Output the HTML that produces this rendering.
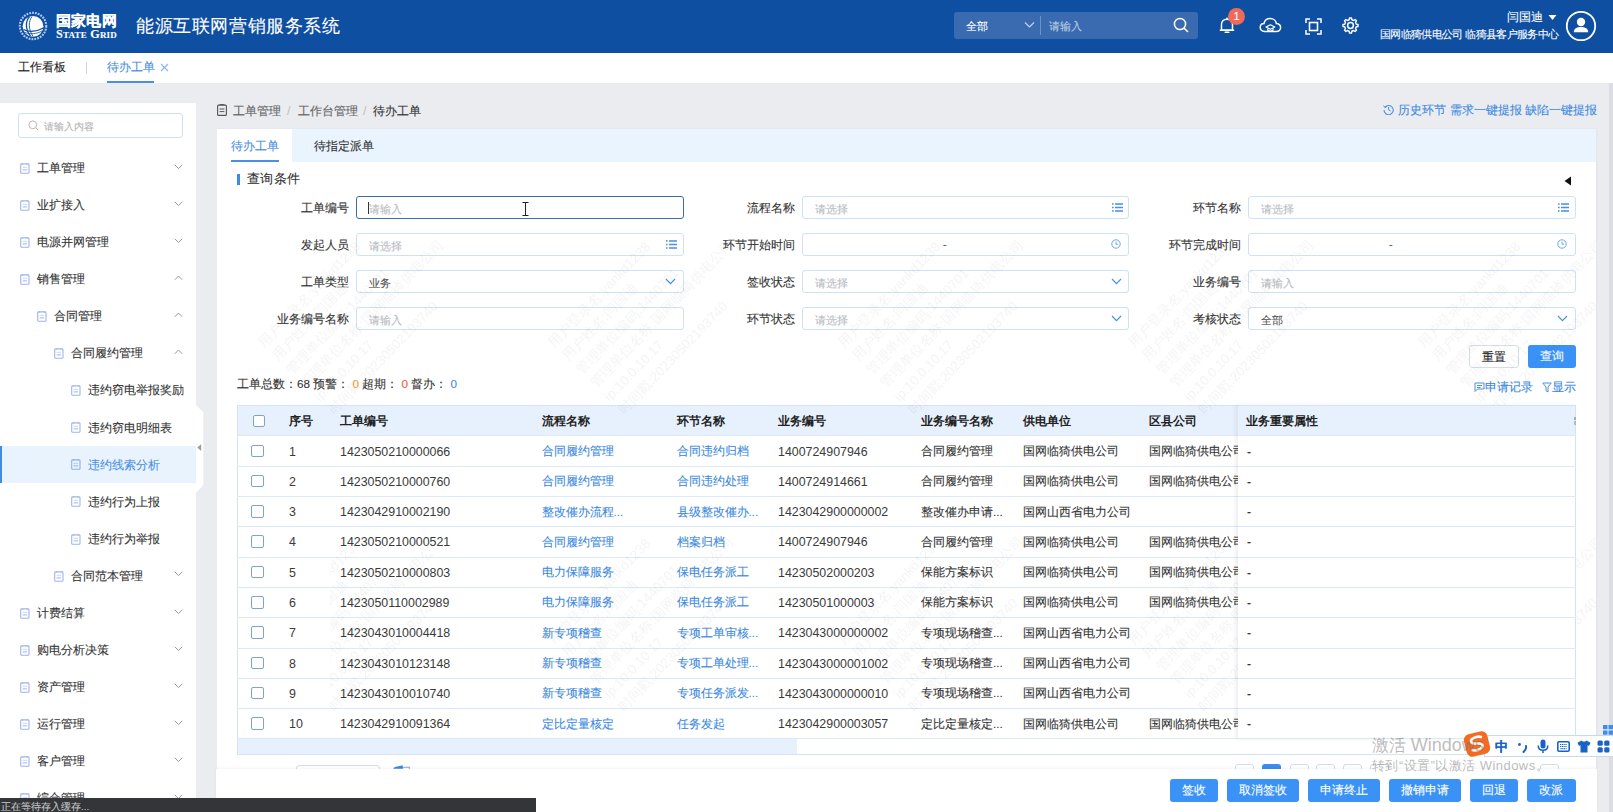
<!DOCTYPE html>
<html><head><meta charset="utf-8">
<style>
*{box-sizing:border-box;margin:0;padding:0}
html,body{width:1613px;height:812px;overflow:hidden}
body{position:relative;background:#eaecf0;font-family:"Liberation Sans",sans-serif;font-size:12px;color:#333}
.a{position:absolute;white-space:nowrap;-webkit-text-stroke-width:0.1px}
.n{-webkit-text-stroke-width:0}
#hdr{left:0;top:0;width:1613px;height:53px;background:#0f4fa2}
#tabs{left:0;top:53px;width:1613px;height:30px;background:#fff}
#side{left:0;top:103px;width:196px;height:709px;background:#fff}
#vscroll{left:1609px;top:83px;width:4px;height:729px;background:#dcdde2}
#panel{left:217px;top:129px;width:1380px;height:640px;background:#fff}
#bottombar{left:216px;top:769px;width:1381px;height:43px;background:#fff}
#status{left:0;top:797px;width:536px;height:15px;background:#333538}
</style></head><body>
<div id="hdr" class="a">
<svg class="a" style="left:17px;top:10px" width="32" height="32" viewBox="0 0 32 32">
<circle cx="16" cy="16" r="13.2" fill="none" stroke="#b5cdef" stroke-width="2.1" stroke-dasharray="1.8 1.1"/>
<circle cx="16" cy="16.3" r="10.4" fill="#fff"/>
<path d="M12.5 6.8 C8.5 11 8 19 13.5 26.2" fill="none" stroke="#0f4fa2" stroke-width="1.3"/>
<path d="M15 6.6 C11.5 11 11 19 16 26.4" fill="none" stroke="#0f4fa2" stroke-width="0.9"/>
<path d="M6.5 19.5 C12 22.5 20 21.5 26.3 18" fill="none" stroke="#0f4fa2" stroke-width="1.2"/>
<path d="M8 22.5 C13 24.5 20 24 25 21" fill="none" stroke="#0f4fa2" stroke-width="0.8"/>
</svg>
<div class="a" style="left:55.5px;top:10.5px;font-size:15px;line-height:20px;color:#fff;font-weight:bold;letter-spacing:0.45px">国家电网</div>
<div class="a" style="left:56px;top:28px;font-family:'Liberation Serif',serif;font-weight:bold;font-size:12.2px;line-height:12px;color:#fff;font-variant:small-caps;letter-spacing:0.2px">State Grid</div>
<div class="a" style="left:136px;top:13px;font-size:18px;line-height:26px;color:#fff;letter-spacing:0.6px">能源互联网营销服务系统</div>

<div class="a" style="left:954px;top:12px;width:244px;height:27px;background:#3a6bb0;border-radius:3px"></div>
<div class="a" style="left:966px;top:19px;font-size:11px;line-height:15px;color:#fff">全部</div>
<svg class="a" style="left:1024px;top:21px" width="11" height="8" viewBox="0 0 11 8"><path d="M1 1.5 L5.5 6 L10 1.5" fill="none" stroke="#c8d6ea" stroke-width="1.1"/></svg>
<div class="a" style="left:1040px;top:16px;width:1px;height:19px;background:#6d92c6"></div>
<div class="a" style="left:1049px;top:19px;font-size:11px;line-height:15px;color:#b9cbe4">请输入</div>
<svg class="a" style="left:1173px;top:17px" width="16" height="16" viewBox="0 0 16 16"><circle cx="7" cy="7" r="5.6" fill="none" stroke="#fff" stroke-width="1.5"/><path d="M11.2 11.2 L14.5 14.5" stroke="#fff" stroke-width="1.6" stroke-linecap="round"/></svg>
<svg class="a" style="left:1218px;top:16px" width="18" height="19" viewBox="0 0 18 19"><path d="M3.5 14 V8.5 C3.5 5.3 5.8 3.2 9 3.2 C12.2 3.2 14.5 5.3 14.5 8.5 V14 Z M1.8 14.2 H16.2" fill="none" stroke="#fff" stroke-width="1.5" stroke-linejoin="round"/><path d="M7.2 16.2 H10.8" stroke="#fff" stroke-width="1.6" stroke-linecap="round"/><path d="M9 1.5 V3" stroke="#fff" stroke-width="1.4"/></svg>
<div class="a" style="left:1228px;top:8px;width:17px;height:17px;border-radius:50%;background:#ef6a5a;color:#fff;font-size:11px;line-height:17px;text-align:center">1</div>
<svg class="a" style="left:1259px;top:17px" width="23" height="17" viewBox="0 0 23 17"><path d="M5.5 14.5 C2.8 14.5 1.2 12.6 1.2 10.4 C1.2 8.2 2.9 6.6 5 6.5 C5.5 3.6 8 1.5 11.2 1.5 C14.5 1.5 17 3.8 17.4 6.6 C19.8 6.8 21.6 8.4 21.6 10.6 C21.6 12.8 19.8 14.5 17.5 14.5 Z" fill="none" stroke="#fff" stroke-width="1.5"/><path d="M7 10 L11.4 7.8 L15.8 10 L11.4 12.2 Z M8.8 11 V13.2 C10.4 14.2 12.4 14.2 14 13.2 V11" fill="none" stroke="#fff" stroke-width="1.2" stroke-linejoin="round"/></svg>
<svg class="a" style="left:1305px;top:18px" width="17" height="17" viewBox="0 0 17 17"><path d="M1 5 V1 H5 M12 1 H16 V5 M16 12 V16 H12 M5 16 H1 V12" fill="none" stroke="#fff" stroke-width="1.5"/><rect x="4.5" y="4.5" width="8" height="8" fill="none" stroke="#fff" stroke-width="1.6"/></svg>
<svg class="a" style="left:1342px;top:17px" width="17" height="17" viewBox="0 0 17 17"><path d="M14.26 7.21 L16.04 7.51 L16.04 9.49 L14.26 9.79 L13.48 11.66 L14.53 13.13 L13.13 14.53 L11.66 13.48 L9.79 14.26 L9.49 16.04 L7.51 16.04 L7.21 14.26 L5.34 13.48 L3.87 14.53 L2.47 13.13 L3.52 11.66 L2.74 9.79 L0.96 9.49 L0.96 7.51 L2.74 7.21 L3.52 5.34 L2.47 3.87 L3.87 2.47 L5.34 3.52 L7.21 2.74 L7.51 0.96 L9.49 0.96 L9.79 2.74 L11.66 3.52 L13.13 2.47 L14.53 3.87 L13.48 5.34 Z" fill="none" stroke="#fff" stroke-width="1.4" stroke-linejoin="round"/><circle cx="8.5" cy="8.5" r="2.9" fill="none" stroke="#fff" stroke-width="1.5"/></svg>
<div class="a" style="left:1507px;top:10px;font-size:11.5px;line-height:15px;color:#fff">闫国迪</div>
<svg class="a" style="left:1548px;top:14px" width="9" height="7" viewBox="0 0 9 7"><path d="M0.5 1 H8.5 L4.5 6 Z" fill="#fff"/></svg>
<div class="a" style="left:1380px;top:27px;font-size:11px;line-height:14px;color:#fff;letter-spacing:-0.65px">国网临猗供电公司&nbsp;临猗县客户服务中心</div>
<svg class="a" style="left:1565px;top:10px" width="32" height="32" viewBox="0 0 32 32"><circle cx="16" cy="16" r="14.2" fill="none" stroke="#fff" stroke-width="1.8"/><circle cx="16" cy="12" r="4.2" fill="#fff"/><path d="M8.8 22.2 C8.8 18.6 11.8 17 16 17 C20.2 17 23.2 18.6 23.2 22.2 Z" fill="#fff"/></svg>
</div>

<div id="tabs" class="a">
<div class="a" style="left:18px;top:6px;font-size:12px;line-height:16px;color:#222">工作看板</div>
<div class="a" style="left:86px;top:9px;width:1px;height:12px;background:#d6d6d6"></div>
<div class="a" style="left:107px;top:6px;font-size:12px;line-height:16px;color:#4a90e2">待办工单</div>
<svg class="a" style="left:160px;top:10px" width="9" height="9" viewBox="0 0 9 9"><path d="M1 1 L8 8 M8 1 L1 8" stroke="#8ab4e8" stroke-width="1.1"/></svg>
<div class="a" style="left:107px;top:28px;width:47px;height:2px;background:#4a90e2"></div>
</div>

<div id="side" class="a">
<div class="a" style="left:18px;top:10px;width:165px;height:25px;background:#fff;border:1px solid #cfe0f3;border-radius:3px"></div>
<svg class="a" style="left:28px;top:17px" width="11" height="11" viewBox="0 0 11 11"><circle cx="4.8" cy="4.8" r="3.9" fill="none" stroke="#b8b8b8" stroke-width="1"/><path d="M7.6 7.6 L10 10" stroke="#b8b8b8" stroke-width="1"/></svg>
<div class="a" style="left:44px;top:16.5px;font-size:10px;line-height:14px;color:#b4b4b4;">请输入内容</div>
<svg class="a" style="left:20px;top:59.7px" width="10" height="11" viewBox="0 0 10 11"><rect x="0.7" y="0.9" width="8.3" height="9.4" rx="0.9" fill="none" stroke="#9fb5ea" stroke-width="1.1"/><path d="M2.6 0.4 V1.6 M7.1 0.4 V1.6" stroke="#9fb5ea" stroke-width="1"/><path d="M2.6 4.3 H7.1" stroke="#9fb5ea" stroke-opacity="0.55" stroke-width="1"/><path d="M2.6 6.9 H7.1" stroke="#9fb5ea" stroke-width="1"/></svg>
<div class="a" style="left:37px;top:57.0px;font-size:11.7px;line-height:16px;color:#333;">工单管理</div>
<svg class="a" style="left:174px;top:60.6px" width="9" height="6" viewBox="0 0 9 6"><path d="M0.8 0.8 L4.5 4.6 L8.2 0.8" fill="none" stroke="#9a9a9a" stroke-width="1"/></svg>
<svg class="a" style="left:20px;top:96.78px" width="10" height="11" viewBox="0 0 10 11"><rect x="0.7" y="0.9" width="8.3" height="9.4" rx="0.9" fill="none" stroke="#9fb5ea" stroke-width="1.1"/><path d="M2.6 0.4 V1.6 M7.1 0.4 V1.6" stroke="#9fb5ea" stroke-width="1"/><path d="M2.6 4.3 H7.1" stroke="#9fb5ea" stroke-opacity="0.55" stroke-width="1"/><path d="M2.6 6.9 H7.1" stroke="#9fb5ea" stroke-width="1"/></svg>
<div class="a" style="left:37px;top:94.08px;font-size:11.7px;line-height:16px;color:#333;">业扩接入</div>
<svg class="a" style="left:174px;top:97.68px" width="9" height="6" viewBox="0 0 9 6"><path d="M0.8 0.8 L4.5 4.6 L8.2 0.8" fill="none" stroke="#9a9a9a" stroke-width="1"/></svg>
<svg class="a" style="left:20px;top:133.86px" width="10" height="11" viewBox="0 0 10 11"><rect x="0.7" y="0.9" width="8.3" height="9.4" rx="0.9" fill="none" stroke="#9fb5ea" stroke-width="1.1"/><path d="M2.6 0.4 V1.6 M7.1 0.4 V1.6" stroke="#9fb5ea" stroke-width="1"/><path d="M2.6 4.3 H7.1" stroke="#9fb5ea" stroke-opacity="0.55" stroke-width="1"/><path d="M2.6 6.9 H7.1" stroke="#9fb5ea" stroke-width="1"/></svg>
<div class="a" style="left:37px;top:131.16px;font-size:11.7px;line-height:16px;color:#333;">电源并网管理</div>
<svg class="a" style="left:174px;top:134.76px" width="9" height="6" viewBox="0 0 9 6"><path d="M0.8 0.8 L4.5 4.6 L8.2 0.8" fill="none" stroke="#9a9a9a" stroke-width="1"/></svg>
<svg class="a" style="left:20px;top:170.94px" width="10" height="11" viewBox="0 0 10 11"><rect x="0.7" y="0.9" width="8.3" height="9.4" rx="0.9" fill="none" stroke="#9fb5ea" stroke-width="1.1"/><path d="M2.6 0.4 V1.6 M7.1 0.4 V1.6" stroke="#9fb5ea" stroke-width="1"/><path d="M2.6 4.3 H7.1" stroke="#9fb5ea" stroke-opacity="0.55" stroke-width="1"/><path d="M2.6 6.9 H7.1" stroke="#9fb5ea" stroke-width="1"/></svg>
<div class="a" style="left:37px;top:168.24px;font-size:11.7px;line-height:16px;color:#333;">销售管理</div>
<svg class="a" style="left:174px;top:171.84px" width="9" height="6" viewBox="0 0 9 6"><path d="M0.8 4.8 L4.5 1 L8.2 4.8" fill="none" stroke="#9a9a9a" stroke-width="1"/></svg>
<svg class="a" style="left:37px;top:208.02px" width="10" height="11" viewBox="0 0 10 11"><rect x="0.7" y="0.9" width="8.3" height="9.4" rx="0.9" fill="none" stroke="#9fb5ea" stroke-width="1.1"/><path d="M2.6 0.4 V1.6 M7.1 0.4 V1.6" stroke="#9fb5ea" stroke-width="1"/><path d="M2.6 4.3 H7.1" stroke="#9fb5ea" stroke-opacity="0.55" stroke-width="1"/><path d="M2.6 6.9 H7.1" stroke="#9fb5ea" stroke-width="1"/></svg>
<div class="a" style="left:54px;top:205.32px;font-size:11.7px;line-height:16px;color:#333;">合同管理</div>
<svg class="a" style="left:174px;top:208.92px" width="9" height="6" viewBox="0 0 9 6"><path d="M0.8 4.8 L4.5 1 L8.2 4.8" fill="none" stroke="#9a9a9a" stroke-width="1"/></svg>
<svg class="a" style="left:54px;top:245.1px" width="10" height="11" viewBox="0 0 10 11"><rect x="0.7" y="0.9" width="8.3" height="9.4" rx="0.9" fill="none" stroke="#9fb5ea" stroke-width="1.1"/><path d="M2.6 0.4 V1.6 M7.1 0.4 V1.6" stroke="#9fb5ea" stroke-width="1"/><path d="M2.6 4.3 H7.1" stroke="#9fb5ea" stroke-opacity="0.55" stroke-width="1"/><path d="M2.6 6.9 H7.1" stroke="#9fb5ea" stroke-width="1"/></svg>
<div class="a" style="left:71px;top:242.4px;font-size:11.7px;line-height:16px;color:#333;">合同履约管理</div>
<svg class="a" style="left:174px;top:246.0px" width="9" height="6" viewBox="0 0 9 6"><path d="M0.8 4.8 L4.5 1 L8.2 4.8" fill="none" stroke="#9a9a9a" stroke-width="1"/></svg>
<svg class="a" style="left:71px;top:282.18px" width="10" height="11" viewBox="0 0 10 11"><rect x="0.7" y="0.9" width="8.3" height="9.4" rx="0.9" fill="none" stroke="#9fb5ea" stroke-width="1.1"/><path d="M2.6 0.4 V1.6 M7.1 0.4 V1.6" stroke="#9fb5ea" stroke-width="1"/><path d="M2.6 4.3 H7.1" stroke="#9fb5ea" stroke-opacity="0.55" stroke-width="1"/><path d="M2.6 6.9 H7.1" stroke="#9fb5ea" stroke-width="1"/></svg>
<div class="a" style="left:88px;top:279.48px;font-size:11.7px;line-height:16px;color:#333;">违约窃电举报奖励</div>
<svg class="a" style="left:71px;top:319.26px" width="10" height="11" viewBox="0 0 10 11"><rect x="0.7" y="0.9" width="8.3" height="9.4" rx="0.9" fill="none" stroke="#9fb5ea" stroke-width="1.1"/><path d="M2.6 0.4 V1.6 M7.1 0.4 V1.6" stroke="#9fb5ea" stroke-width="1"/><path d="M2.6 4.3 H7.1" stroke="#9fb5ea" stroke-opacity="0.55" stroke-width="1"/><path d="M2.6 6.9 H7.1" stroke="#9fb5ea" stroke-width="1"/></svg>
<div class="a" style="left:88px;top:316.56px;font-size:11.7px;line-height:16px;color:#333;">违约窃电明细表</div>
<div class="a" style="left:0px;top:342.64px;width:196px;height:37px;background:#e8f3fe;"></div>
<div class="a" style="left:0px;top:342.64px;width:2px;height:37px;background:#3f8ce8;"></div>
<svg class="a" style="left:71px;top:356.34px" width="10" height="11" viewBox="0 0 10 11"><rect x="0.7" y="0.9" width="8.3" height="9.4" rx="0.9" fill="none" stroke="#8fb0e6" stroke-width="1.1"/><path d="M2.6 0.4 V1.6 M7.1 0.4 V1.6" stroke="#8fb0e6" stroke-width="1"/><path d="M2.6 4.3 H7.1" stroke="#8fb0e6" stroke-opacity="0.55" stroke-width="1"/><path d="M2.6 6.9 H7.1" stroke="#8fb0e6" stroke-width="1"/></svg>
<div class="a" style="left:88px;top:353.64px;font-size:11.7px;line-height:16px;color:#4a90e2;">违约线索分析</div>
<svg class="a" style="left:71px;top:393.42px" width="10" height="11" viewBox="0 0 10 11"><rect x="0.7" y="0.9" width="8.3" height="9.4" rx="0.9" fill="none" stroke="#9fb5ea" stroke-width="1.1"/><path d="M2.6 0.4 V1.6 M7.1 0.4 V1.6" stroke="#9fb5ea" stroke-width="1"/><path d="M2.6 4.3 H7.1" stroke="#9fb5ea" stroke-opacity="0.55" stroke-width="1"/><path d="M2.6 6.9 H7.1" stroke="#9fb5ea" stroke-width="1"/></svg>
<div class="a" style="left:88px;top:390.72px;font-size:11.7px;line-height:16px;color:#333;">违约行为上报</div>
<svg class="a" style="left:71px;top:430.5px" width="10" height="11" viewBox="0 0 10 11"><rect x="0.7" y="0.9" width="8.3" height="9.4" rx="0.9" fill="none" stroke="#9fb5ea" stroke-width="1.1"/><path d="M2.6 0.4 V1.6 M7.1 0.4 V1.6" stroke="#9fb5ea" stroke-width="1"/><path d="M2.6 4.3 H7.1" stroke="#9fb5ea" stroke-opacity="0.55" stroke-width="1"/><path d="M2.6 6.9 H7.1" stroke="#9fb5ea" stroke-width="1"/></svg>
<div class="a" style="left:88px;top:427.8px;font-size:11.7px;line-height:16px;color:#333;">违约行为举报</div>
<svg class="a" style="left:54px;top:467.58px" width="10" height="11" viewBox="0 0 10 11"><rect x="0.7" y="0.9" width="8.3" height="9.4" rx="0.9" fill="none" stroke="#9fb5ea" stroke-width="1.1"/><path d="M2.6 0.4 V1.6 M7.1 0.4 V1.6" stroke="#9fb5ea" stroke-width="1"/><path d="M2.6 4.3 H7.1" stroke="#9fb5ea" stroke-opacity="0.55" stroke-width="1"/><path d="M2.6 6.9 H7.1" stroke="#9fb5ea" stroke-width="1"/></svg>
<div class="a" style="left:71px;top:464.88px;font-size:11.7px;line-height:16px;color:#333;">合同范本管理</div>
<svg class="a" style="left:174px;top:468.48px" width="9" height="6" viewBox="0 0 9 6"><path d="M0.8 0.8 L4.5 4.6 L8.2 0.8" fill="none" stroke="#9a9a9a" stroke-width="1"/></svg>
<svg class="a" style="left:20px;top:504.66px" width="10" height="11" viewBox="0 0 10 11"><rect x="0.7" y="0.9" width="8.3" height="9.4" rx="0.9" fill="none" stroke="#9fb5ea" stroke-width="1.1"/><path d="M2.6 0.4 V1.6 M7.1 0.4 V1.6" stroke="#9fb5ea" stroke-width="1"/><path d="M2.6 4.3 H7.1" stroke="#9fb5ea" stroke-opacity="0.55" stroke-width="1"/><path d="M2.6 6.9 H7.1" stroke="#9fb5ea" stroke-width="1"/></svg>
<div class="a" style="left:37px;top:501.96px;font-size:11.7px;line-height:16px;color:#333;">计费结算</div>
<svg class="a" style="left:174px;top:505.56px" width="9" height="6" viewBox="0 0 9 6"><path d="M0.8 0.8 L4.5 4.6 L8.2 0.8" fill="none" stroke="#9a9a9a" stroke-width="1"/></svg>
<svg class="a" style="left:20px;top:541.74px" width="10" height="11" viewBox="0 0 10 11"><rect x="0.7" y="0.9" width="8.3" height="9.4" rx="0.9" fill="none" stroke="#9fb5ea" stroke-width="1.1"/><path d="M2.6 0.4 V1.6 M7.1 0.4 V1.6" stroke="#9fb5ea" stroke-width="1"/><path d="M2.6 4.3 H7.1" stroke="#9fb5ea" stroke-opacity="0.55" stroke-width="1"/><path d="M2.6 6.9 H7.1" stroke="#9fb5ea" stroke-width="1"/></svg>
<div class="a" style="left:37px;top:539.04px;font-size:11.7px;line-height:16px;color:#333;">购电分析决策</div>
<svg class="a" style="left:174px;top:542.64px" width="9" height="6" viewBox="0 0 9 6"><path d="M0.8 0.8 L4.5 4.6 L8.2 0.8" fill="none" stroke="#9a9a9a" stroke-width="1"/></svg>
<svg class="a" style="left:20px;top:578.82px" width="10" height="11" viewBox="0 0 10 11"><rect x="0.7" y="0.9" width="8.3" height="9.4" rx="0.9" fill="none" stroke="#9fb5ea" stroke-width="1.1"/><path d="M2.6 0.4 V1.6 M7.1 0.4 V1.6" stroke="#9fb5ea" stroke-width="1"/><path d="M2.6 4.3 H7.1" stroke="#9fb5ea" stroke-opacity="0.55" stroke-width="1"/><path d="M2.6 6.9 H7.1" stroke="#9fb5ea" stroke-width="1"/></svg>
<div class="a" style="left:37px;top:576.12px;font-size:11.7px;line-height:16px;color:#333;">资产管理</div>
<svg class="a" style="left:174px;top:579.72px" width="9" height="6" viewBox="0 0 9 6"><path d="M0.8 0.8 L4.5 4.6 L8.2 0.8" fill="none" stroke="#9a9a9a" stroke-width="1"/></svg>
<svg class="a" style="left:20px;top:615.9px" width="10" height="11" viewBox="0 0 10 11"><rect x="0.7" y="0.9" width="8.3" height="9.4" rx="0.9" fill="none" stroke="#9fb5ea" stroke-width="1.1"/><path d="M2.6 0.4 V1.6 M7.1 0.4 V1.6" stroke="#9fb5ea" stroke-width="1"/><path d="M2.6 4.3 H7.1" stroke="#9fb5ea" stroke-opacity="0.55" stroke-width="1"/><path d="M2.6 6.9 H7.1" stroke="#9fb5ea" stroke-width="1"/></svg>
<div class="a" style="left:37px;top:613.2px;font-size:11.7px;line-height:16px;color:#333;">运行管理</div>
<svg class="a" style="left:174px;top:616.8px" width="9" height="6" viewBox="0 0 9 6"><path d="M0.8 0.8 L4.5 4.6 L8.2 0.8" fill="none" stroke="#9a9a9a" stroke-width="1"/></svg>
<svg class="a" style="left:20px;top:652.98px" width="10" height="11" viewBox="0 0 10 11"><rect x="0.7" y="0.9" width="8.3" height="9.4" rx="0.9" fill="none" stroke="#9fb5ea" stroke-width="1.1"/><path d="M2.6 0.4 V1.6 M7.1 0.4 V1.6" stroke="#9fb5ea" stroke-width="1"/><path d="M2.6 4.3 H7.1" stroke="#9fb5ea" stroke-opacity="0.55" stroke-width="1"/><path d="M2.6 6.9 H7.1" stroke="#9fb5ea" stroke-width="1"/></svg>
<div class="a" style="left:37px;top:650.28px;font-size:11.7px;line-height:16px;color:#333;">客户管理</div>
<svg class="a" style="left:174px;top:653.88px" width="9" height="6" viewBox="0 0 9 6"><path d="M0.8 0.8 L4.5 4.6 L8.2 0.8" fill="none" stroke="#9a9a9a" stroke-width="1"/></svg>
<svg class="a" style="left:20px;top:690.06px" width="10" height="11" viewBox="0 0 10 11"><rect x="0.7" y="0.9" width="8.3" height="9.4" rx="0.9" fill="none" stroke="#9fb5ea" stroke-width="1.1"/><path d="M2.6 0.4 V1.6 M7.1 0.4 V1.6" stroke="#9fb5ea" stroke-width="1"/><path d="M2.6 4.3 H7.1" stroke="#9fb5ea" stroke-opacity="0.55" stroke-width="1"/><path d="M2.6 6.9 H7.1" stroke="#9fb5ea" stroke-width="1"/></svg>
<div class="a" style="left:37px;top:687.36px;font-size:11.7px;line-height:16px;color:#333;">综合管理</div>
<svg class="a" style="left:174px;top:690.96px" width="9" height="6" viewBox="0 0 9 6"><path d="M0.8 0.8 L4.5 4.6 L8.2 0.8" fill="none" stroke="#9a9a9a" stroke-width="1"/></svg>
</div>
<div class="a" style="left:1609px;top:83px;width:4px;height:729px;background:#dcdde2;"></div>
<svg class="a" style="left:196px;top:405px" width="8" height="88" viewBox="0 0 8 88"><path d="M0 0 L7.3 7.3 V80.5 L0 87.8 Z" fill="#fff"/><path d="M5.2 39.2 V46 L1.2 42.6 Z" fill="#9c9c9c"/></svg>
<svg class="a" style="left:217px;top:104px" width="10" height="12" viewBox="0 0 10 12"><rect x="0.6" y="1.1" width="8.8" height="10.3" rx="1" fill="none" stroke="#555" stroke-width="1.1"/><path d="M2.5 0.6 H7.5 M2.6 5 H7.4 M2.6 7.6 H7.4" stroke="#555" stroke-width="1"/></svg>
<div class="a" style="left:233px;top:102.5px;font-size:11.7px;line-height:16px;color:#666;">工单管理</div>
<div class="a" style="left:287px;top:102.5px;font-size:12.5px;line-height:16px;color:#c4c4c4;">/</div>
<div class="a" style="left:298px;top:102.5px;font-size:11.7px;line-height:16px;color:#666;">工作台管理</div>
<div class="a" style="left:363px;top:102.5px;font-size:12.5px;line-height:16px;color:#c4c4c4;">/</div>
<div class="a" style="left:373px;top:102.5px;font-size:11.7px;line-height:16px;color:#333;">待办工单</div>
<svg class="a" style="left:1383px;top:104px" width="11" height="11" viewBox="0 0 11 11"><path d="M2 3.2 A4.6 4.6 0 1 1 1 6" fill="none" stroke="#4a90e2" stroke-width="1.1"/><path d="M0.6 1.6 L1.9 3.6 L3.9 2.6" fill="none" stroke="#4a90e2" stroke-width="1"/><path d="M5.6 3 V5.8 L7.6 7" fill="none" stroke="#4a90e2" stroke-width="1"/></svg>
<div class="a" style="left:1398px;top:102px;font-size:11.6px;line-height:16px;color:#3d8ae0;">历史环节</div>
<div class="a" style="left:1450px;top:102px;font-size:11.6px;line-height:16px;color:#3d8ae0;">需求一键提报</div>
<div class="a" style="left:1525px;top:102px;font-size:11.6px;line-height:16px;color:#3d8ae0;">缺陷一键提报</div>
<div class="a" style="left:217px;top:129px;width:1379px;height:640px;background:#fff;box-shadow:1px 0 2px rgba(0,0,0,0.04)"></div>
<div class="a" style="left:217px;top:129px;width:1379px;height:33px;background:#eaf4ff;"></div>
<div class="a" style="left:217px;top:129px;width:75px;height:33px;background:#fff;"></div>
<div class="a" style="left:231px;top:138px;font-size:11.8px;line-height:16px;color:#4a90e2;">待办工单</div>
<div class="a" style="left:231px;top:160px;width:48px;height:2px;background:#4a90e2;"></div>
<div class="a" style="left:314px;top:138px;font-size:11.8px;line-height:16px;color:#333;">待指定派单</div>
<div class="a" style="left:237px;top:174px;width:3px;height:11px;background:#3f8ce8;"></div>
<div class="a" style="left:247px;top:170px;font-size:13px;line-height:18px;color:#333;letter-spacing:0.35px">查询条件</div>
<svg class="a" style="left:1564px;top:176px" width="8" height="10" viewBox="0 0 8 10"><path d="M7 0.5 V9.5 L0.5 5 Z" fill="#111"/></svg>
<div class="a" style="left:228.5px;top:200px;font-size:11.7px;line-height:16px;color:#333;width:120px;text-align:right">工单编号</div>
<div class="a" style="left:355.5px;top:196px;width:328px;height:23px;background:#fff;border:1px solid #3b6ea8;border-radius:3px"></div>
<div class="a" style="left:368.5px;top:200.5px;font-size:11px;line-height:16px;color:#b8bcc2;">请输入</div>
<div class="a" style="left:367.5px;top:202px;width:1px;height:12px;background:#333;"></div>
<svg class="a" style="left:522px;top:202px" width="7" height="14" viewBox="0 0 7 14"><path d="M0.5 0.5 H6.5 M0.5 13.5 H6.5 M3.5 0.5 V13.5" stroke="#222" stroke-width="1"/></svg>
<div class="a" style="left:675px;top:200px;font-size:11.7px;line-height:16px;color:#333;width:120px;text-align:right">流程名称</div>
<div class="a" style="left:802px;top:196px;width:327px;height:23px;background:#fff;border:1px solid #cfe1f5;border-radius:3px"></div>
<div class="a" style="left:815px;top:200.5px;font-size:11px;line-height:16px;color:#b8bcc2;">请选择</div>
<svg class="a" style="left:1112px;top:203px" width="11" height="9" viewBox="0 0 11 9"><path d="M0 1 H1.6 M3 1 H11 M0 4.5 H1.6 M3 4.5 H11 M0 8 H1.6 M3 8 H11" stroke="#4a90e2" stroke-width="1.6"/></svg>
<div class="a" style="left:1121px;top:200px;font-size:11.7px;line-height:16px;color:#333;width:120px;text-align:right">环节名称</div>
<div class="a" style="left:1248px;top:196px;width:328px;height:23px;background:#fff;border:1px solid #cfe1f5;border-radius:3px"></div>
<div class="a" style="left:1261px;top:200.5px;font-size:11px;line-height:16px;color:#b8bcc2;">请选择</div>
<svg class="a" style="left:1558px;top:203px" width="11" height="9" viewBox="0 0 11 9"><path d="M0 1 H1.6 M3 1 H11 M0 4.5 H1.6 M3 4.5 H11 M0 8 H1.6 M3 8 H11" stroke="#4a90e2" stroke-width="1.6"/></svg>
<div class="a" style="left:228.5px;top:237px;font-size:11.7px;line-height:16px;color:#333;width:120px;text-align:right">发起人员</div>
<div class="a" style="left:355.5px;top:233px;width:328px;height:23px;background:#fff;border:1px solid #cfe1f5;border-radius:3px"></div>
<div class="a" style="left:368.5px;top:237.5px;font-size:11px;line-height:16px;color:#b8bcc2;">请选择</div>
<svg class="a" style="left:665.5px;top:240px" width="11" height="9" viewBox="0 0 11 9"><path d="M0 1 H1.6 M3 1 H11 M0 4.5 H1.6 M3 4.5 H11 M0 8 H1.6 M3 8 H11" stroke="#4a90e2" stroke-width="1.6"/></svg>
<div class="a" style="left:675px;top:237px;font-size:11.7px;line-height:16px;color:#333;width:120px;text-align:right">环节开始时间</div>
<div class="a" style="left:802px;top:233px;width:327px;height:23px;background:#fff;border:1px solid #cfe1f5;border-radius:3px"></div>
<div class="a" style="left:943px;top:236px;font-size:11px;line-height:16px;color:#555;">-</div>
<svg class="a" style="left:1111px;top:239px" width="10" height="10" viewBox="0 0 10 10"><circle cx="5" cy="5" r="4.2" fill="none" stroke="#6aa7ea" stroke-width="1"/><path d="M5 2.6 V5.2 H7" fill="none" stroke="#6aa7ea" stroke-width="1"/></svg>
<div class="a" style="left:1121px;top:237px;font-size:11.7px;line-height:16px;color:#333;width:120px;text-align:right">环节完成时间</div>
<div class="a" style="left:1248px;top:233px;width:328px;height:23px;background:#fff;border:1px solid #cfe1f5;border-radius:3px"></div>
<div class="a" style="left:1389px;top:236px;font-size:11px;line-height:16px;color:#555;">-</div>
<svg class="a" style="left:1557px;top:239px" width="10" height="10" viewBox="0 0 10 10"><circle cx="5" cy="5" r="4.2" fill="none" stroke="#6aa7ea" stroke-width="1"/><path d="M5 2.6 V5.2 H7" fill="none" stroke="#6aa7ea" stroke-width="1"/></svg>
<div class="a" style="left:228.5px;top:274px;font-size:11.7px;line-height:16px;color:#333;width:120px;text-align:right">工单类型</div>
<div class="a" style="left:355.5px;top:270px;width:328px;height:23px;background:#fff;border:1px solid #cfe1f5;border-radius:3px"></div>
<div class="a" style="left:368.5px;top:274.5px;font-size:11px;line-height:16px;color:#555;">业务</div>
<svg class="a" style="left:664.5px;top:278px" width="11" height="7" viewBox="0 0 11 7"><path d="M1 1 L5.5 5.6 L10 1" fill="none" stroke="#4a90e2" stroke-width="1.2"/></svg>
<div class="a" style="left:675px;top:274px;font-size:11.7px;line-height:16px;color:#333;width:120px;text-align:right">签收状态</div>
<div class="a" style="left:802px;top:270px;width:327px;height:23px;background:#fff;border:1px solid #cfe1f5;border-radius:3px"></div>
<div class="a" style="left:815px;top:274.5px;font-size:11px;line-height:16px;color:#b8bcc2;">请选择</div>
<svg class="a" style="left:1111px;top:278px" width="11" height="7" viewBox="0 0 11 7"><path d="M1 1 L5.5 5.6 L10 1" fill="none" stroke="#4a90e2" stroke-width="1.2"/></svg>
<div class="a" style="left:1121px;top:274px;font-size:11.7px;line-height:16px;color:#333;width:120px;text-align:right">业务编号</div>
<div class="a" style="left:1248px;top:270px;width:328px;height:23px;background:#fff;border:1px solid #cfe1f5;border-radius:3px"></div>
<div class="a" style="left:1261px;top:274.5px;font-size:11px;line-height:16px;color:#b8bcc2;">请输入</div>
<div class="a" style="left:228.5px;top:311px;font-size:11.7px;line-height:16px;color:#333;width:120px;text-align:right">业务编号名称</div>
<div class="a" style="left:355.5px;top:307px;width:328px;height:23px;background:#fff;border:1px solid #cfe1f5;border-radius:3px"></div>
<div class="a" style="left:368.5px;top:311.5px;font-size:11px;line-height:16px;color:#b8bcc2;">请输入</div>
<div class="a" style="left:675px;top:311px;font-size:11.7px;line-height:16px;color:#333;width:120px;text-align:right">环节状态</div>
<div class="a" style="left:802px;top:307px;width:327px;height:23px;background:#fff;border:1px solid #cfe1f5;border-radius:3px"></div>
<div class="a" style="left:815px;top:311.5px;font-size:11px;line-height:16px;color:#b8bcc2;">请选择</div>
<svg class="a" style="left:1111px;top:315px" width="11" height="7" viewBox="0 0 11 7"><path d="M1 1 L5.5 5.6 L10 1" fill="none" stroke="#4a90e2" stroke-width="1.2"/></svg>
<div class="a" style="left:1121px;top:311px;font-size:11.7px;line-height:16px;color:#333;width:120px;text-align:right">考核状态</div>
<div class="a" style="left:1248px;top:307px;width:328px;height:23px;background:#fff;border:1px solid #cfe1f5;border-radius:3px"></div>
<div class="a" style="left:1261px;top:311.5px;font-size:11px;line-height:16px;color:#555;">全部</div>
<svg class="a" style="left:1557px;top:315px" width="11" height="7" viewBox="0 0 11 7"><path d="M1 1 L5.5 5.6 L10 1" fill="none" stroke="#4a90e2" stroke-width="1.2"/></svg>
<div class="a" style="left:1469px;top:345px;font-size:11.7px;line-height:21px;color:#222;width:50px;height:23px;border:1px solid #d6dde6;border-radius:3px;background:#fff;text-align:center">重置</div>
<div class="a" style="left:1528px;top:345px;font-size:11.7px;line-height:22px;color:#fff;width:48px;height:23px;border-radius:3px;background:#3a92f6;text-align:center">查询</div>
<svg class="a" style="left:1474px;top:382px" width="11" height="11" viewBox="0 0 11 11"><path d="M1 1 H10 V7 H3.5 L1 9.5 Z M3 3.5 H8 M3 5.5 H6.5" fill="none" stroke="#4a90e2" stroke-width="1"/></svg>
<div class="a" style="left:1485px;top:379px;font-size:11.6px;line-height:16px;color:#3d8ae0;">申请记录</div>
<svg class="a" style="left:1542px;top:382px" width="10" height="11" viewBox="0 0 10 11"><path d="M0.8 1 H9.2 L6 5 V10 L4 8.8 V5 Z" fill="none" stroke="#4a90e2" stroke-width="1"/></svg>
<div class="a" style="left:1552px;top:379px;font-size:11.6px;line-height:16px;color:#3d8ae0;">显示</div>
<div class="a" style="left:237px;top:376px;font-size:11.7px;line-height:16px;color:#333;">工单总数：68 预警：<span style="color:#f0a030">&nbsp;0</span> 超期：<span style="color:#e85a4a">&nbsp;0</span> 督办：<span style="color:#3d8ae0">&nbsp;0</span></div>
<div class="a" style="left:237px;top:405px;width:1339px;height:349.5px;background:#fff;border:1px solid #d3e3f4"></div>
<div class="a" style="left:237px;top:405px;width:1339px;height:30.4px;background:#e7f1fd;border:1px solid #d3e3f4;border-bottom:none"></div>
<div class="a" style="left:252.8px;top:414.6px;width:12.5px;height:12.5px;background:#fff;border:1.3px solid #7ea3cc;border-radius:2px"></div>
<div class="a" style="left:289px;top:412.7px;font-size:11.7px;line-height:16px;color:#222;font-weight:bold;-webkit-text-stroke-width:0">序号</div>
<div class="a" style="left:340px;top:412.7px;font-size:11.7px;line-height:16px;color:#222;font-weight:bold;-webkit-text-stroke-width:0">工单编号</div>
<div class="a" style="left:541.5px;top:412.7px;font-size:11.7px;line-height:16px;color:#222;font-weight:bold;-webkit-text-stroke-width:0">流程名称</div>
<div class="a" style="left:676.5px;top:412.7px;font-size:11.7px;line-height:16px;color:#222;font-weight:bold;-webkit-text-stroke-width:0">环节名称</div>
<div class="a" style="left:778px;top:412.7px;font-size:11.7px;line-height:16px;color:#222;font-weight:bold;-webkit-text-stroke-width:0">业务编号</div>
<div class="a" style="left:921px;top:412.7px;font-size:11.7px;line-height:16px;color:#222;font-weight:bold;-webkit-text-stroke-width:0">业务编号名称</div>
<div class="a" style="left:1022.5px;top:412.7px;font-size:11.7px;line-height:16px;color:#222;font-weight:bold;-webkit-text-stroke-width:0">供电单位</div>
<div class="a" style="left:1148.5px;top:412.7px;font-size:11.7px;line-height:16px;color:#222;font-weight:bold;-webkit-text-stroke-width:0">区县公司</div>
<div class="a" style="left:237px;top:435.4px;width:1339px;height:1px;background:#dbe9f8;"></div>
<div class="a" style="left:237px;top:465.7px;width:1339px;height:1px;background:#dbe9f8;"></div>
<div class="a" style="left:237px;top:496.0px;width:1339px;height:1px;background:#dbe9f8;"></div>
<div class="a" style="left:237px;top:526.3px;width:1339px;height:1px;background:#dbe9f8;"></div>
<div class="a" style="left:237px;top:556.6px;width:1339px;height:1px;background:#dbe9f8;"></div>
<div class="a" style="left:237px;top:586.9px;width:1339px;height:1px;background:#dbe9f8;"></div>
<div class="a" style="left:237px;top:617.2px;width:1339px;height:1px;background:#dbe9f8;"></div>
<div class="a" style="left:237px;top:647.5px;width:1339px;height:1px;background:#dbe9f8;"></div>
<div class="a" style="left:237px;top:677.8px;width:1339px;height:1px;background:#dbe9f8;"></div>
<div class="a" style="left:237px;top:708.1px;width:1339px;height:1px;background:#dbe9f8;"></div>
<div class="a" style="left:237px;top:738.4px;width:1339px;height:1px;background:#dbe9f8;"></div>
<div class="a" style="left:251.2px;top:444.55px;width:12.5px;height:12.5px;background:#fff;border:1.3px solid #7ea3cc;border-radius:2px"></div>
<div class="a" style="left:289px;top:443.55px;font-size:12.4px;line-height:16px;color:#3a3a3a;-webkit-text-stroke-width:0">1</div>
<div class="a" style="left:340px;top:443.55px;font-size:12.4px;line-height:16px;color:#3a3a3a;-webkit-text-stroke-width:0">1423050210000066</div>
<div class="a" style="left:541.5px;top:442.95px;font-size:11.6px;line-height:16px;color:#3d8ae0;">合同履约管理</div>
<div class="a" style="left:676.5px;top:442.95px;font-size:11.6px;line-height:16px;color:#3d8ae0;">合同违约归档</div>
<div class="a" style="left:778px;top:443.55px;font-size:12.4px;line-height:16px;color:#3a3a3a;-webkit-text-stroke-width:0">1400724907946</div>
<div class="a" style="left:921px;top:442.95px;font-size:11.6px;line-height:16px;color:#333;">合同履约管理</div>
<div class="a" style="left:1022.5px;top:442.95px;font-size:11.6px;line-height:16px;color:#333;">国网临猗供电公司</div>
<div class="a" style="left:1148.5px;top:442.95px;font-size:11.6px;line-height:16px;color:#333;">国网临猗供电公司</div>
<div class="a" style="left:251.2px;top:474.85px;width:12.5px;height:12.5px;background:#fff;border:1.3px solid #7ea3cc;border-radius:2px"></div>
<div class="a" style="left:289px;top:473.85px;font-size:12.4px;line-height:16px;color:#3a3a3a;-webkit-text-stroke-width:0">2</div>
<div class="a" style="left:340px;top:473.85px;font-size:12.4px;line-height:16px;color:#3a3a3a;-webkit-text-stroke-width:0">1423050210000760</div>
<div class="a" style="left:541.5px;top:473.25px;font-size:11.6px;line-height:16px;color:#3d8ae0;">合同履约管理</div>
<div class="a" style="left:676.5px;top:473.25px;font-size:11.6px;line-height:16px;color:#3d8ae0;">合同违约处理</div>
<div class="a" style="left:778px;top:473.85px;font-size:12.4px;line-height:16px;color:#3a3a3a;-webkit-text-stroke-width:0">1400724914661</div>
<div class="a" style="left:921px;top:473.25px;font-size:11.6px;line-height:16px;color:#333;">合同履约管理</div>
<div class="a" style="left:1022.5px;top:473.25px;font-size:11.6px;line-height:16px;color:#333;">国网临猗供电公司</div>
<div class="a" style="left:1148.5px;top:473.25px;font-size:11.6px;line-height:16px;color:#333;">国网临猗供电公司</div>
<div class="a" style="left:251.2px;top:505.15px;width:12.5px;height:12.5px;background:#fff;border:1.3px solid #7ea3cc;border-radius:2px"></div>
<div class="a" style="left:289px;top:504.15px;font-size:12.4px;line-height:16px;color:#3a3a3a;-webkit-text-stroke-width:0">3</div>
<div class="a" style="left:340px;top:504.15px;font-size:12.4px;line-height:16px;color:#3a3a3a;-webkit-text-stroke-width:0">1423042910002190</div>
<div class="a" style="left:541.5px;top:503.55px;font-size:11.6px;line-height:16px;color:#3d8ae0;">整改催办流程...</div>
<div class="a" style="left:676.5px;top:503.55px;font-size:11.6px;line-height:16px;color:#3d8ae0;">县级整改催办...</div>
<div class="a" style="left:778px;top:504.15px;font-size:12.4px;line-height:16px;color:#3a3a3a;-webkit-text-stroke-width:0">1423042900000002</div>
<div class="a" style="left:921px;top:503.55px;font-size:11.6px;line-height:16px;color:#333;">整改催办申请...</div>
<div class="a" style="left:1022.5px;top:503.55px;font-size:11.6px;line-height:16px;color:#333;">国网山西省电力公司</div>
<div class="a" style="left:1148.5px;top:503.55px;font-size:11.6px;line-height:16px;color:#333;"></div>
<div class="a" style="left:251.2px;top:535.45px;width:12.5px;height:12.5px;background:#fff;border:1.3px solid #7ea3cc;border-radius:2px"></div>
<div class="a" style="left:289px;top:534.45px;font-size:12.4px;line-height:16px;color:#3a3a3a;-webkit-text-stroke-width:0">4</div>
<div class="a" style="left:340px;top:534.45px;font-size:12.4px;line-height:16px;color:#3a3a3a;-webkit-text-stroke-width:0">1423050210000521</div>
<div class="a" style="left:541.5px;top:533.85px;font-size:11.6px;line-height:16px;color:#3d8ae0;">合同履约管理</div>
<div class="a" style="left:676.5px;top:533.85px;font-size:11.6px;line-height:16px;color:#3d8ae0;">档案归档</div>
<div class="a" style="left:778px;top:534.45px;font-size:12.4px;line-height:16px;color:#3a3a3a;-webkit-text-stroke-width:0">1400724907946</div>
<div class="a" style="left:921px;top:533.85px;font-size:11.6px;line-height:16px;color:#333;">合同履约管理</div>
<div class="a" style="left:1022.5px;top:533.85px;font-size:11.6px;line-height:16px;color:#333;">国网临猗供电公司</div>
<div class="a" style="left:1148.5px;top:533.85px;font-size:11.6px;line-height:16px;color:#333;">国网临猗供电公司</div>
<div class="a" style="left:251.2px;top:565.75px;width:12.5px;height:12.5px;background:#fff;border:1.3px solid #7ea3cc;border-radius:2px"></div>
<div class="a" style="left:289px;top:564.75px;font-size:12.4px;line-height:16px;color:#3a3a3a;-webkit-text-stroke-width:0">5</div>
<div class="a" style="left:340px;top:564.75px;font-size:12.4px;line-height:16px;color:#3a3a3a;-webkit-text-stroke-width:0">1423050210000803</div>
<div class="a" style="left:541.5px;top:564.15px;font-size:11.6px;line-height:16px;color:#3d8ae0;">电力保障服务</div>
<div class="a" style="left:676.5px;top:564.15px;font-size:11.6px;line-height:16px;color:#3d8ae0;">保电任务派工</div>
<div class="a" style="left:778px;top:564.75px;font-size:12.4px;line-height:16px;color:#3a3a3a;-webkit-text-stroke-width:0">14230502000203</div>
<div class="a" style="left:921px;top:564.15px;font-size:11.6px;line-height:16px;color:#333;">保能方案标识</div>
<div class="a" style="left:1022.5px;top:564.15px;font-size:11.6px;line-height:16px;color:#333;">国网临猗供电公司</div>
<div class="a" style="left:1148.5px;top:564.15px;font-size:11.6px;line-height:16px;color:#333;">国网临猗供电公司</div>
<div class="a" style="left:251.2px;top:596.05px;width:12.5px;height:12.5px;background:#fff;border:1.3px solid #7ea3cc;border-radius:2px"></div>
<div class="a" style="left:289px;top:595.05px;font-size:12.4px;line-height:16px;color:#3a3a3a;-webkit-text-stroke-width:0">6</div>
<div class="a" style="left:340px;top:595.05px;font-size:12.4px;line-height:16px;color:#3a3a3a;-webkit-text-stroke-width:0">1423050110002989</div>
<div class="a" style="left:541.5px;top:594.45px;font-size:11.6px;line-height:16px;color:#3d8ae0;">电力保障服务</div>
<div class="a" style="left:676.5px;top:594.45px;font-size:11.6px;line-height:16px;color:#3d8ae0;">保电任务派工</div>
<div class="a" style="left:778px;top:595.05px;font-size:12.4px;line-height:16px;color:#3a3a3a;-webkit-text-stroke-width:0">14230501000003</div>
<div class="a" style="left:921px;top:594.45px;font-size:11.6px;line-height:16px;color:#333;">保能方案标识</div>
<div class="a" style="left:1022.5px;top:594.45px;font-size:11.6px;line-height:16px;color:#333;">国网临猗供电公司</div>
<div class="a" style="left:1148.5px;top:594.45px;font-size:11.6px;line-height:16px;color:#333;">国网临猗供电公司</div>
<div class="a" style="left:251.2px;top:626.35px;width:12.5px;height:12.5px;background:#fff;border:1.3px solid #7ea3cc;border-radius:2px"></div>
<div class="a" style="left:289px;top:625.35px;font-size:12.4px;line-height:16px;color:#3a3a3a;-webkit-text-stroke-width:0">7</div>
<div class="a" style="left:340px;top:625.35px;font-size:12.4px;line-height:16px;color:#3a3a3a;-webkit-text-stroke-width:0">1423043010004418</div>
<div class="a" style="left:541.5px;top:624.75px;font-size:11.6px;line-height:16px;color:#3d8ae0;">新专项稽查</div>
<div class="a" style="left:676.5px;top:624.75px;font-size:11.6px;line-height:16px;color:#3d8ae0;">专项工单审核...</div>
<div class="a" style="left:778px;top:625.35px;font-size:12.4px;line-height:16px;color:#3a3a3a;-webkit-text-stroke-width:0">1423043000000002</div>
<div class="a" style="left:921px;top:624.75px;font-size:11.6px;line-height:16px;color:#333;">专项现场稽查...</div>
<div class="a" style="left:1022.5px;top:624.75px;font-size:11.6px;line-height:16px;color:#333;">国网山西省电力公司</div>
<div class="a" style="left:1148.5px;top:624.75px;font-size:11.6px;line-height:16px;color:#333;"></div>
<div class="a" style="left:251.2px;top:656.65px;width:12.5px;height:12.5px;background:#fff;border:1.3px solid #7ea3cc;border-radius:2px"></div>
<div class="a" style="left:289px;top:655.65px;font-size:12.4px;line-height:16px;color:#3a3a3a;-webkit-text-stroke-width:0">8</div>
<div class="a" style="left:340px;top:655.65px;font-size:12.4px;line-height:16px;color:#3a3a3a;-webkit-text-stroke-width:0">1423043010123148</div>
<div class="a" style="left:541.5px;top:655.05px;font-size:11.6px;line-height:16px;color:#3d8ae0;">新专项稽查</div>
<div class="a" style="left:676.5px;top:655.05px;font-size:11.6px;line-height:16px;color:#3d8ae0;">专项工单处理...</div>
<div class="a" style="left:778px;top:655.65px;font-size:12.4px;line-height:16px;color:#3a3a3a;-webkit-text-stroke-width:0">1423043000001002</div>
<div class="a" style="left:921px;top:655.05px;font-size:11.6px;line-height:16px;color:#333;">专项现场稽查...</div>
<div class="a" style="left:1022.5px;top:655.05px;font-size:11.6px;line-height:16px;color:#333;">国网山西省电力公司</div>
<div class="a" style="left:1148.5px;top:655.05px;font-size:11.6px;line-height:16px;color:#333;"></div>
<div class="a" style="left:251.2px;top:686.95px;width:12.5px;height:12.5px;background:#fff;border:1.3px solid #7ea3cc;border-radius:2px"></div>
<div class="a" style="left:289px;top:685.95px;font-size:12.4px;line-height:16px;color:#3a3a3a;-webkit-text-stroke-width:0">9</div>
<div class="a" style="left:340px;top:685.95px;font-size:12.4px;line-height:16px;color:#3a3a3a;-webkit-text-stroke-width:0">1423043010010740</div>
<div class="a" style="left:541.5px;top:685.35px;font-size:11.6px;line-height:16px;color:#3d8ae0;">新专项稽查</div>
<div class="a" style="left:676.5px;top:685.35px;font-size:11.6px;line-height:16px;color:#3d8ae0;">专项任务派发...</div>
<div class="a" style="left:778px;top:685.95px;font-size:12.4px;line-height:16px;color:#3a3a3a;-webkit-text-stroke-width:0">1423043000000010</div>
<div class="a" style="left:921px;top:685.35px;font-size:11.6px;line-height:16px;color:#333;">专项现场稽查...</div>
<div class="a" style="left:1022.5px;top:685.35px;font-size:11.6px;line-height:16px;color:#333;">国网山西省电力公司</div>
<div class="a" style="left:1148.5px;top:685.35px;font-size:11.6px;line-height:16px;color:#333;"></div>
<div class="a" style="left:251.2px;top:717.25px;width:12.5px;height:12.5px;background:#fff;border:1.3px solid #7ea3cc;border-radius:2px"></div>
<div class="a" style="left:289px;top:716.25px;font-size:12.4px;line-height:16px;color:#3a3a3a;-webkit-text-stroke-width:0">10</div>
<div class="a" style="left:340px;top:716.25px;font-size:12.4px;line-height:16px;color:#3a3a3a;-webkit-text-stroke-width:0">1423042910091364</div>
<div class="a" style="left:541.5px;top:715.65px;font-size:11.6px;line-height:16px;color:#3d8ae0;">定比定量核定</div>
<div class="a" style="left:676.5px;top:715.65px;font-size:11.6px;line-height:16px;color:#3d8ae0;">任务发起</div>
<div class="a" style="left:778px;top:716.25px;font-size:12.4px;line-height:16px;color:#3a3a3a;-webkit-text-stroke-width:0">1423042900003057</div>
<div class="a" style="left:921px;top:715.65px;font-size:11.6px;line-height:16px;color:#333;">定比定量核定...</div>
<div class="a" style="left:1022.5px;top:715.65px;font-size:11.6px;line-height:16px;color:#333;">国网临猗供电公司</div>
<div class="a" style="left:1148.5px;top:715.65px;font-size:11.6px;line-height:16px;color:#333;">国网临猗供电公司</div>
<div class="a" style="left:238px;top:739.4px;width:559px;height:14.5px;background:#e7f1fd;"></div>
<svg class="a" style="left:217px;top:129px" width="1379" height="640" viewBox="0 0 1379 640"><defs><pattern id="wm" patternUnits="userSpaceOnUse" x="27" y="59" width="290" height="297"><g transform="translate(20 160) rotate(-46)" font-size="13.5" fill="#000" fill-opacity="0.045" font-family="Liberation Sans, sans-serif"><text x="0" y="0.0">用户登录名:yankd1238</text><text x="0" y="19.4">用户姓名:闫国迪</text><text x="0" y="38.8">管理单位编码:1440701</text><text x="0" y="58.2">管理单位名称:国网临猗供电公司</text><text x="0" y="77.6">ip:10.0.10.17</text><text x="0" y="97.0">时间戳:20230502193740</text></g></pattern></defs><rect width="1379" height="640" fill="url(#wm)"/></svg>
<div class="a" style="left:237px;top:405px;width:93px;height:30.4px;background:#e7f1fd;border-top:1px solid #d3e3f4;border-left:1px solid #d3e3f4"></div>
<div class="a" style="left:252.8px;top:414.6px;width:12.5px;height:12.5px;background:#fff;border:1.3px solid #7ea3cc;border-radius:2px"></div>
<div class="a" style="left:289px;top:412.7px;font-size:11.7px;line-height:16px;color:#222;font-weight:bold;-webkit-text-stroke-width:0">序号</div>
<div class="a" style="left:237px;top:435.4px;width:93px;height:303.0px;background:#fff;border-left:1px solid #d3e3f4"></div>
<div class="a" style="left:237px;top:435.4px;width:93px;height:1px;background:#dbe9f8;"></div>
<div class="a" style="left:237px;top:465.7px;width:93px;height:1px;background:#dbe9f8;"></div>
<div class="a" style="left:237px;top:496.0px;width:93px;height:1px;background:#dbe9f8;"></div>
<div class="a" style="left:237px;top:526.3px;width:93px;height:1px;background:#dbe9f8;"></div>
<div class="a" style="left:237px;top:556.6px;width:93px;height:1px;background:#dbe9f8;"></div>
<div class="a" style="left:237px;top:586.9px;width:93px;height:1px;background:#dbe9f8;"></div>
<div class="a" style="left:237px;top:617.2px;width:93px;height:1px;background:#dbe9f8;"></div>
<div class="a" style="left:237px;top:647.5px;width:93px;height:1px;background:#dbe9f8;"></div>
<div class="a" style="left:237px;top:677.8px;width:93px;height:1px;background:#dbe9f8;"></div>
<div class="a" style="left:237px;top:708.1px;width:93px;height:1px;background:#dbe9f8;"></div>
<div class="a" style="left:237px;top:738.4px;width:93px;height:1px;background:#dbe9f8;"></div>
<div class="a" style="left:251.2px;top:444.55px;width:12.5px;height:12.5px;background:#fff;border:1.3px solid #7ea3cc;border-radius:2px"></div>
<div class="a" style="left:289px;top:443.55px;font-size:12.4px;line-height:16px;color:#3a3a3a;-webkit-text-stroke-width:0">1</div>
<div class="a" style="left:251.2px;top:474.85px;width:12.5px;height:12.5px;background:#fff;border:1.3px solid #7ea3cc;border-radius:2px"></div>
<div class="a" style="left:289px;top:473.85px;font-size:12.4px;line-height:16px;color:#3a3a3a;-webkit-text-stroke-width:0">2</div>
<div class="a" style="left:251.2px;top:505.15px;width:12.5px;height:12.5px;background:#fff;border:1.3px solid #7ea3cc;border-radius:2px"></div>
<div class="a" style="left:289px;top:504.15px;font-size:12.4px;line-height:16px;color:#3a3a3a;-webkit-text-stroke-width:0">3</div>
<div class="a" style="left:251.2px;top:535.45px;width:12.5px;height:12.5px;background:#fff;border:1.3px solid #7ea3cc;border-radius:2px"></div>
<div class="a" style="left:289px;top:534.45px;font-size:12.4px;line-height:16px;color:#3a3a3a;-webkit-text-stroke-width:0">4</div>
<div class="a" style="left:251.2px;top:565.75px;width:12.5px;height:12.5px;background:#fff;border:1.3px solid #7ea3cc;border-radius:2px"></div>
<div class="a" style="left:289px;top:564.75px;font-size:12.4px;line-height:16px;color:#3a3a3a;-webkit-text-stroke-width:0">5</div>
<div class="a" style="left:251.2px;top:596.05px;width:12.5px;height:12.5px;background:#fff;border:1.3px solid #7ea3cc;border-radius:2px"></div>
<div class="a" style="left:289px;top:595.05px;font-size:12.4px;line-height:16px;color:#3a3a3a;-webkit-text-stroke-width:0">6</div>
<div class="a" style="left:251.2px;top:626.35px;width:12.5px;height:12.5px;background:#fff;border:1.3px solid #7ea3cc;border-radius:2px"></div>
<div class="a" style="left:289px;top:625.35px;font-size:12.4px;line-height:16px;color:#3a3a3a;-webkit-text-stroke-width:0">7</div>
<div class="a" style="left:251.2px;top:656.65px;width:12.5px;height:12.5px;background:#fff;border:1.3px solid #7ea3cc;border-radius:2px"></div>
<div class="a" style="left:289px;top:655.65px;font-size:12.4px;line-height:16px;color:#3a3a3a;-webkit-text-stroke-width:0">8</div>
<div class="a" style="left:251.2px;top:686.95px;width:12.5px;height:12.5px;background:#fff;border:1.3px solid #7ea3cc;border-radius:2px"></div>
<div class="a" style="left:289px;top:685.95px;font-size:12.4px;line-height:16px;color:#3a3a3a;-webkit-text-stroke-width:0">9</div>
<div class="a" style="left:251.2px;top:717.25px;width:12.5px;height:12.5px;background:#fff;border:1.3px solid #7ea3cc;border-radius:2px"></div>
<div class="a" style="left:289px;top:716.25px;font-size:12.4px;line-height:16px;color:#3a3a3a;-webkit-text-stroke-width:0">10</div>
<div class="a" style="left:1238px;top:405px;width:338px;height:334.4px;background:#fff;border:1px solid #d3e3f4;border-left:none;box-shadow:-3px 0 4px rgba(0,0,0,0.06)"></div>
<div class="a" style="left:1238px;top:405px;width:338px;height:30.4px;background:#e7f1fd;border-top:1px solid #d3e3f4;border-right:1px solid #d3e3f4"></div>
<div class="a" style="left:1246px;top:412.7px;font-size:11.7px;line-height:16px;color:#222;font-weight:bold;-webkit-text-stroke-width:0">业务重要属性</div>
<div class="a" style="left:1574px;top:417px;width:2px;height:2.5px;background:#a9aeb5;"></div>
<div class="a" style="left:1574px;top:420.5px;width:2px;height:4px;background:#b4b9c0;"></div>
<div class="a" style="left:1238px;top:435.4px;width:338px;height:1px;background:#dbe9f8;"></div>
<div class="a" style="left:1238px;top:465.7px;width:338px;height:1px;background:#dbe9f8;"></div>
<div class="a" style="left:1238px;top:496.0px;width:338px;height:1px;background:#dbe9f8;"></div>
<div class="a" style="left:1238px;top:526.3px;width:338px;height:1px;background:#dbe9f8;"></div>
<div class="a" style="left:1238px;top:556.6px;width:338px;height:1px;background:#dbe9f8;"></div>
<div class="a" style="left:1238px;top:586.9px;width:338px;height:1px;background:#dbe9f8;"></div>
<div class="a" style="left:1238px;top:617.2px;width:338px;height:1px;background:#dbe9f8;"></div>
<div class="a" style="left:1238px;top:647.5px;width:338px;height:1px;background:#dbe9f8;"></div>
<div class="a" style="left:1238px;top:677.8px;width:338px;height:1px;background:#dbe9f8;"></div>
<div class="a" style="left:1238px;top:708.1px;width:338px;height:1px;background:#dbe9f8;"></div>
<div class="a" style="left:1238px;top:738.4px;width:338px;height:1px;background:#dbe9f8;"></div>
<div class="a" style="left:1247px;top:443.55px;font-size:12px;line-height:16px;color:#333;">-</div>
<div class="a" style="left:1247px;top:473.85px;font-size:12px;line-height:16px;color:#333;">-</div>
<div class="a" style="left:1247px;top:504.15px;font-size:12px;line-height:16px;color:#333;">-</div>
<div class="a" style="left:1247px;top:534.45px;font-size:12px;line-height:16px;color:#333;">-</div>
<div class="a" style="left:1247px;top:564.75px;font-size:12px;line-height:16px;color:#333;">-</div>
<div class="a" style="left:1247px;top:595.05px;font-size:12px;line-height:16px;color:#333;">-</div>
<div class="a" style="left:1247px;top:625.35px;font-size:12px;line-height:16px;color:#333;">-</div>
<div class="a" style="left:1247px;top:655.65px;font-size:12px;line-height:16px;color:#333;">-</div>
<div class="a" style="left:1247px;top:685.95px;font-size:12px;line-height:16px;color:#333;">-</div>
<div class="a" style="left:1247px;top:716.25px;font-size:12px;line-height:16px;color:#333;">-</div>
<div class="a" style="left:295.5px;top:765px;width:84.5px;height:10px;background:#fff;border:1px solid #d2dceb;border-radius:3px"></div>
<svg class="a" style="left:392px;top:764px" width="20" height="5" viewBox="0 0 20 5"><path d="M1.2 4.8 C1.5 3.2 4 2.4 7.5 2 L10.5 1.3 L11.2 4.8 Z" fill="#3d8ae0"/><path d="M11 3.3 H17.3 V4.8" fill="none" stroke="#8fa6c0" stroke-width="1.1"/></svg>
<div class="a" style="left:1234.6px;top:763.5px;width:19px;height:12px;background:#fff;border:1px solid #d2dceb;border-radius:3px"></div>
<div class="a" style="left:1289.5px;top:763.5px;width:19px;height:12px;background:#fff;border:1px solid #d2dceb;border-radius:3px"></div>
<div class="a" style="left:1316.2px;top:763.5px;width:19px;height:12px;background:#fff;border:1px solid #d2dceb;border-radius:3px"></div>
<div class="a" style="left:1343px;top:763.5px;width:19px;height:12px;background:#fff;border:1px solid #d2dceb;border-radius:3px"></div>
<div class="a" style="left:1369.6px;top:763.5px;width:19px;height:12px;background:#fff;border:1px solid #d2dceb;border-radius:3px"></div>
<div class="a" style="left:1540px;top:763.5px;width:19px;height:12px;background:#fff;border:1px solid #d2dceb;border-radius:3px"></div>
<div class="a" style="left:1262px;top:763.5px;width:19px;height:12px;background:#3d8cf0;border-radius:3px"></div>
<div class="a" style="left:216px;top:769px;width:1381px;height:43px;background:#fff;box-shadow:0 -1px 3px rgba(0,0,0,0.05)"></div>
<div class="a" style="left:1169.5px;top:779px;font-size:11.7px;line-height:22px;color:#fff;width:48.5px;height:23.3px;border-radius:3px;background:#3a92f6;text-align:center">签收</div>
<div class="a" style="left:1227px;top:779px;font-size:11.7px;line-height:22px;color:#fff;width:71.7px;height:23.3px;border-radius:3px;background:#3a92f6;text-align:center">取消签收</div>
<div class="a" style="left:1308px;top:779px;font-size:11.7px;line-height:22px;color:#fff;width:71.6px;height:23.3px;border-radius:3px;background:#3a92f6;text-align:center">申请终止</div>
<div class="a" style="left:1389px;top:779px;font-size:11.7px;line-height:22px;color:#fff;width:71.6px;height:23.3px;border-radius:3px;background:#3a92f6;text-align:center">撤销申请</div>
<div class="a" style="left:1469.5px;top:779px;font-size:11.7px;line-height:22px;color:#fff;width:48.5px;height:23.3px;border-radius:3px;background:#3a92f6;text-align:center">回退</div>
<div class="a" style="left:1527px;top:779px;font-size:11.7px;line-height:22px;color:#fff;width:48.5px;height:23.3px;border-radius:3px;background:#3a92f6;text-align:center">改派</div>
<div class="a" style="left:0px;top:798px;width:536px;height:14px;background:#333538;"></div>
<div class="a" style="left:1px;top:799.5px;font-size:9.7px;line-height:14px;color:#c4c4c4;">正在等待存入缓存...</div>

<div class="a" style="left:1484px;top:735px;width:140px;height:21.5px;background:#fff;border:1px solid #cad8ea"></div>
<svg class="a" style="left:1462px;top:730px" width="30" height="28" viewBox="0 0 30 28"><g transform="rotate(-14 15 14)"><rect x="3" y="2.5" width="24" height="23" rx="6" fill="#f36a22"/><path d="M20.5 8.2 C18.6 6.7 13.5 6.4 11 8.3 C8.6 10.2 10 12.8 14.6 13.4 C19.4 14 21 15.7 19.2 18.2 C17.2 20.8 11.6 20.5 9 18.8" fill="none" stroke="#fff" stroke-width="2.6" stroke-linecap="round"/></g></svg>
<div class="a" style="left:1495px;top:738px;font-size:13px;line-height:17px;color:#1a63c6;font-weight:bold">中</div>
<svg class="a" style="left:1517px;top:741px" width="12" height="12" viewBox="0 0 12 12"><circle cx="2.5" cy="3.5" r="1.4" fill="#1a63c6"/><path d="M9 5 C9.5 7.5 8.5 9.5 6.5 11" fill="none" stroke="#1a63c6" stroke-width="2" stroke-linecap="round"/></svg>
<svg class="a" style="left:1537px;top:739px" width="12" height="15" viewBox="0 0 12 15"><rect x="3.5" y="0.5" width="5" height="9" rx="2.5" fill="#1a63c6"/><path d="M1.2 6.5 C1.2 9.5 3.3 11.3 6 11.3 C8.7 11.3 10.8 9.5 10.8 6.5 M6 11.3 V14" fill="none" stroke="#1a63c6" stroke-width="1.5"/></svg>
<svg class="a" style="left:1557px;top:741px" width="13" height="11" viewBox="0 0 13 11"><rect x="0.8" y="0.8" width="11.4" height="9.4" rx="1.2" fill="none" stroke="#1a63c6" stroke-width="1.6"/><path d="M3 3.5 H10 M3 5.5 H10 M3.5 7.6 H9.5" stroke="#1a63c6" stroke-width="1.1" stroke-dasharray="1.2 0.6"/></svg>
<svg class="a" style="left:1577px;top:740px" width="14" height="13" viewBox="0 0 14 13"><path d="M4.5 0.5 C5.5 2 8.5 2 9.5 0.5 L13.5 2.8 L12 6 L10.5 5.3 V12.5 H3.5 V5.3 L2 6 L0.5 2.8 Z" fill="#1a63c6"/></svg>
<svg class="a" style="left:1597px;top:740px" width="13" height="13" viewBox="0 0 13 13"><rect x="0.5" y="0.5" width="5.3" height="5.3" rx="1.5" fill="#1a63c6"/><rect x="7.2" y="0.5" width="5.3" height="5.3" rx="1.5" fill="#1a63c6"/><rect x="0.5" y="7.2" width="5.3" height="5.3" rx="1.5" fill="#1a63c6"/><rect x="7.2" y="7.2" width="5.3" height="5.3" rx="1.5" fill="#1a63c6"/></svg>
<svg class="a" style="left:1603px;top:725px" width="10" height="10" viewBox="0 0 10 10"><rect x="0" y="0" width="4.5" height="4.2" fill="#3d8cf0"/><rect x="5.5" y="0" width="4.5" height="4.2" fill="#3d8cf0"/><rect x="0" y="5.5" width="4.5" height="4.2" fill="#3d8cf0"/><rect x="5.5" y="5.5" width="4.5" height="4.2" fill="#3d8cf0"/></svg>

<div class="a" style="left:1372px;top:734px;font-size:17px;line-height:22px;color:rgba(110,110,110,0.45)">激活 <span style="font-size:18px">Windows</span></div>
<div class="a" style="left:1372px;top:758px;font-size:13px;line-height:16px;color:rgba(110,110,110,0.45);letter-spacing:0.45px">转到“设置”以激活 Windows。</div>

</body></html>
